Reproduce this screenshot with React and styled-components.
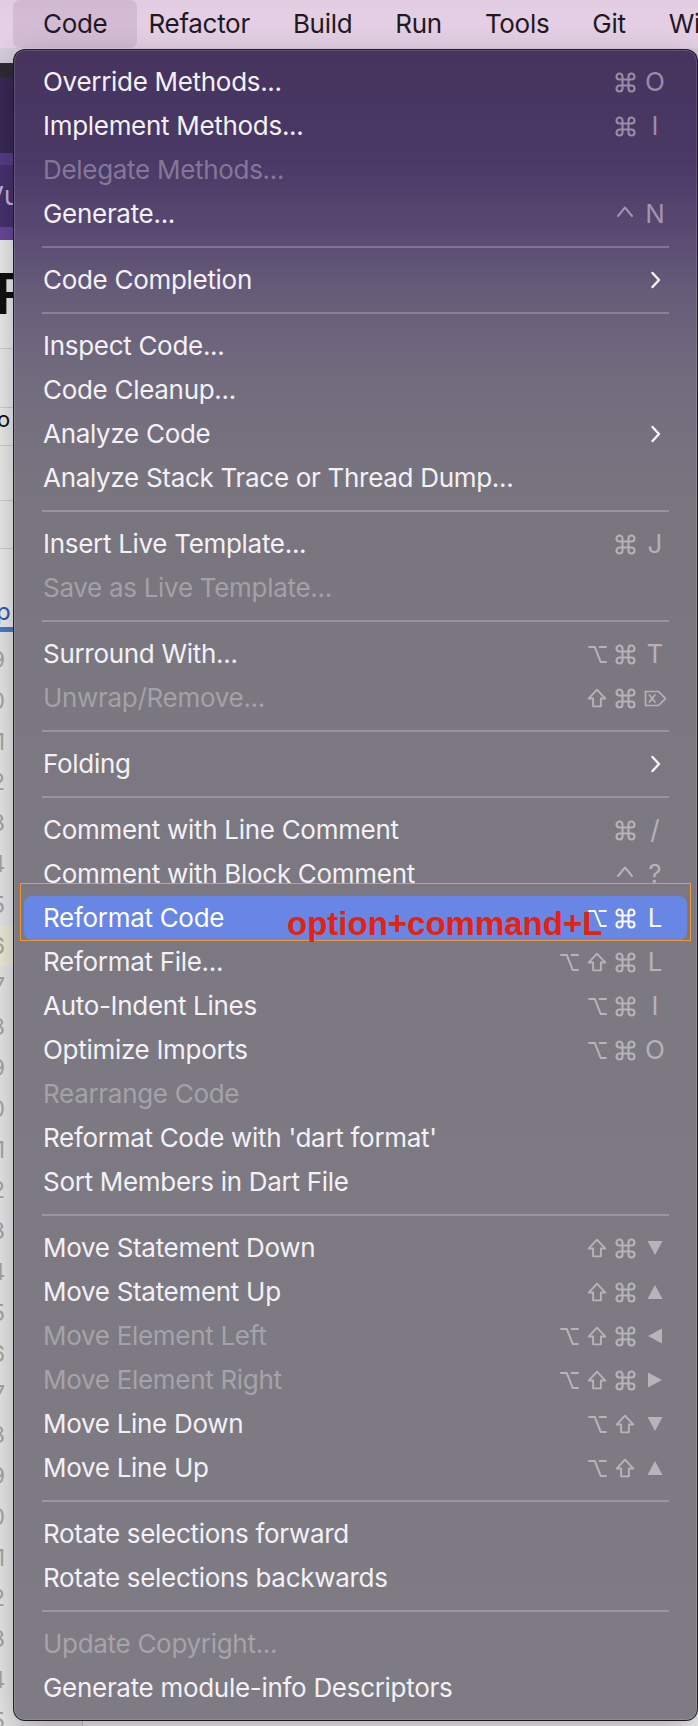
import React from "react";
import styled, { createGlobalStyle } from "styled-components";

const GlobalStyle = createGlobalStyle`
  html, body {
    margin: 0;
    padding: 0;
  }
  body {
    width: 698px;
    height: 1726px;
    overflow: hidden;
    background: #f4f4f4;
    font-family: Inter, "Noto Sans", sans-serif;
    -webkit-font-smoothing: antialiased;
  }
`;

const barItems = ["Code", "Refactor", "Build", "Run", "Tools", "Git", "Window"];

const menu = [
  { label: "Override Methods...", mods: ["cmd"], key: "O" },
  { label: "Implement Methods...", mods: ["cmd"], key: "I" },
  { label: "Delegate Methods...", disabled: true },
  { label: "Generate...", mods: ["ctrl"], key: "N" },
  "sep",
  { label: "Code Completion", submenu: true },
  "sep",
  { label: "Inspect Code..." },
  { label: "Code Cleanup..." },
  { label: "Analyze Code", submenu: true },
  { label: "Analyze Stack Trace or Thread Dump..." },
  "sep",
  { label: "Insert Live Template...", mods: ["cmd"], key: "J" },
  { label: "Save as Live Template...", disabled: true },
  "sep",
  { label: "Surround With...", mods: ["opt", "cmd"], key: "T" },
  { label: "Unwrap/Remove...", disabled: true, mods: ["shift", "cmd"], key: "del" },
  "sep",
  { label: "Folding", submenu: true },
  "sep",
  { label: "Comment with Line Comment", mods: ["cmd"], key: "/" },
  { label: "Comment with Block Comment", mods: ["ctrl"], key: "?" },
  { label: "Reformat Code", mods: ["opt", "cmd"], key: "L", active: true },
  { label: "Reformat File...", mods: ["opt", "shift", "cmd"], key: "L" },
  { label: "Auto-Indent Lines", mods: ["opt", "cmd"], key: "I" },
  { label: "Optimize Imports", mods: ["opt", "cmd"], key: "O" },
  { label: "Rearrange Code", disabled: true },
  { label: "Reformat Code with 'dart format'" },
  { label: "Sort Members in Dart File" },
  "sep",
  { label: "Move Statement Down", mods: ["shift", "cmd"], key: "down" },
  { label: "Move Statement Up", mods: ["shift", "cmd"], key: "up" },
  { label: "Move Element Left", disabled: true, mods: ["opt", "shift", "cmd"], key: "left" },
  { label: "Move Element Right", disabled: true, mods: ["opt", "shift", "cmd"], key: "right" },
  { label: "Move Line Down", mods: ["opt", "shift"], key: "down" },
  { label: "Move Line Up", mods: ["opt", "shift"], key: "up" },
  "sep",
  { label: "Rotate selections forward" },
  { label: "Rotate selections backwards" },
  "sep",
  { label: "Update Copyright...", disabled: true },
  { label: "Generate module-info Descriptors" },
];

const lineNumbers = Array.from({ length: 28 }, (_, i) => i + 9);

// modifier key glyphs, drawn the way the mac menu shows them
const ModGlyph = ({ type }) => {
  if (type === "cmd") {
    return (
      <Glyph width="19" height="19" viewBox="2.5 2.5 19 19" strokeWidth="2.1">
        <path d="M15 6v12a3 3 0 1 0 3-3H6a3 3 0 1 0 3 3V6a3 3 0 1 0-3 3h12a3 3 0 1 0-3-3" />
      </Glyph>
    );
  }
  if (type === "opt") {
    return (
      <Glyph width="19" height="19" viewBox="0 0 18 18" strokeWidth="1.9">
        <path d="M1 2h5.5L12 16h5M11 2h6" />
      </Glyph>
    );
  }
  if (type === "shift") {
    return (
      <Glyph width="20" height="20" viewBox="0 0 18 18" strokeWidth="1.7">
        <path d="M9 1.5 1.5 9.5h4v7h7v-7h4z" />
      </Glyph>
    );
  }
  return (
    <Glyph width="18" height="20" viewBox="0 0 18 20" strokeWidth="2">
      <path d="M2 12 9 3.5 16 12" />
    </Glyph>
  );
};

const triangles = {
  up: "8,1 15.5,15 0.5,15",
  down: "0.5,1 15.5,1 8,15",
  left: "15,0.5 15,15.5 1,8",
  right: "1,0.5 1,15.5 15,8",
};

const KeyGlyph = ({ value }) => {
  if (triangles[value]) {
    return (
      <svg width="16" height="16" viewBox="0 0 16 16">
        <polygon points={triangles[value]} fill="currentColor" />
      </svg>
    );
  }
  if (value === "del") {
    return (
      <Glyph width="23" height="17" viewBox="0 0 23 17" strokeWidth="1.7">
        <path d="M1.5 1.5h13l7 7-7 7h-13z" />
        <path d="M5.5 5 11 12M11 5l-5.5 7" />
      </Glyph>
    );
  }
  return <KeyText>{value}</KeyText>;
};

const Chevron = () => (
  <Glyph width="11" height="18" viewBox="0 0 11 18" strokeWidth="2.4">
    <path d="M2.5 2 9 9l-6.5 7" />
  </Glyph>
);

const MenuRow = ({ item }) => (
  <Row $active={item.active} $disabled={item.disabled}>
    <Label>{item.label}</Label>
    {item.submenu && (
      <Shortcut $submenu>
        <KeySlot>
          <Chevron />
        </KeySlot>
      </Shortcut>
    )}
    {item.key && (
      <Shortcut $active={item.active}>
        <Mods>
          {item.mods.map((m) => (
            <ModSlot key={m}>
              <ModGlyph type={m} />
            </ModSlot>
          ))}
        </Mods>
        <KeySlot>
          <KeyGlyph value={item.key} />
        </KeySlot>
      </Shortcut>
    )}
  </Row>
);

const App = () => {
  return (
    <Screen>
      <GlobalStyle />
      <MenuBar>
        {barItems.map((name, i) => (
          <BarItem key={name} $active={i === 0}>
            {name}
          </BarItem>
        ))}
      </MenuBar>
      <Workspace>
        <Editor>
          <Band $h={15} $bg="#d5cdda" />
          <Band $h={14} $bg="#2e2b33" />
          <Band $h={76} $bg="#3a2958" />
          <Band $h={12} $bg="#5a3e8b" />
          <TabBand>Vu</TabBand>
          <Band $h={13} $bg="#6a49a0" />
          <FileHeader>F</FileHeader>
          <ListRow $h={59} />
          <ListRow $h={38}>o</ListRow>
          <ListRow $h={55} />
          <ListRow $h={48} />
          <TabRow>
            <TabLabel>p</TabLabel>
          </TabRow>
          <CodeRegion>
            <Gutter>
              {lineNumbers.map((n, i) => (
                <GutterLine key={n} $current={i === 7}>
                  <LineNo>{n}</LineNo>
                </GutterLine>
              ))}
            </Gutter>
            <CodeArea />
          </CodeRegion>
        </Editor>

        <Dropdown>
          {menu.map((item, i) => {
            if (item === "sep") return <Separator key={"s" + i} />;
            if (item.active) {
              return (
                <Callout key={item.label}>
                  <MenuRow item={item} />
                  <Frame />
                  <Note>option+command+L</Note>
                </Callout>
              );
            }
            return <MenuRow key={item.label} item={item} />;
          })}
        </Dropdown>
      </Workspace>
    </Screen>
  );
};

const Screen = styled.div`
  width: 698px;
  height: 1726px;
  display: flex;
  flex-direction: column;
  overflow: hidden;
`;

const MenuBar = styled.div`
  display: flex;
  align-items: center;
  height: 48px;
  padding-left: 13px;
  background: linear-gradient(180deg, #e2cce2 0%, #e6d2e6 100%);
  white-space: nowrap;
  overflow: hidden;
  flex: none;
`;

const BarItem = styled.div`
  flex: none;
  height: 48px;
  line-height: 48px;
  font-size: 26px;
  letter-spacing: -0.3px;
  color: #1e1a1f;
  padding: ${({ $active }) => ($active ? "0 30px" : "0 21.5px")};
  margin-right: ${({ $active }) => ($active ? "-10.5px" : "0")};
  border-radius: 7px;
  background: ${({ $active }) => ($active ? "rgba(110, 60, 110, 0.13)" : "transparent")};
`;

const Workspace = styled.div`
  position: relative;
  flex: 1;
`;

const Editor = styled.div`
  display: flex;
  flex-direction: column;
  height: 100%;
  background: #f4f4f4;
`;

const Band = styled.div`
  flex: none;
  height: ${({ $h }) => $h}px;
  background: ${({ $bg }) => $bg};
`;

const TabBand = styled.div`
  flex: none;
  height: 62px;
  line-height: 62px;
  background: #493371;
  color: #c9b9e6;
  font-size: 26px;
  text-indent: -14px;
`;

const FileHeader = styled.div`
  flex: none;
  height: 108px;
  line-height: 108px;
  background: #f2f2f2;
  color: #111;
  font-size: 56px;
  font-weight: 600;
  text-indent: -5px;
`;

const ListRow = styled.div`
  flex: none;
  height: ${({ $h }) => $h}px;
  box-sizing: border-box;
  border-top: 1px solid #d3d3d3;
  background: #f0f0f0;
  font-size: 22px;
  line-height: 22px;
  color: #111;
  text-indent: -3px;
`;

const TabRow = styled.div`
  flex: none;
  height: 84px;
  box-sizing: border-box;
  display: flex;
  align-items: flex-end;
  background: #f3f3f3;
  border-top: 1px solid #d3d3d3;
  border-bottom: 5px solid #4a7ed6;
`;

const TabLabel = styled.span`
  font-size: 24px;
  color: #2f5fb8;
  line-height: 30px;
  margin-left: -4px;
`;

const CodeRegion = styled.div`
  flex: 1;
  display: flex;
  min-height: 0;
`;

const Gutter = styled.div`
  width: 82px;
  flex: none;
  padding-top: 8px;
  background: #ececec;
  border-right: 1px solid #cfcfcf;
  overflow: hidden;
`;

const GutterLine = styled.div`
  height: 40.8px;
  background: ${({ $current }) => ($current ? "#f3f1dc" : "transparent")};
`;

const LineNo = styled.div`
  width: 45px;
  margin-left: -40px;
  text-align: right;
  font-size: 23px;
  line-height: 40.8px;
  color: #a8a8a8;
`;

const CodeArea = styled.div`
  flex: 1;
  background: #f7f7f7;
`;

const Dropdown = styled.div`
  position: absolute;
  top: 1px;
  left: 13px;
  right: 0;
  height: 1672px;
  box-sizing: border-box;
  padding: 10px 0;
  border: 1px solid rgba(20, 16, 24, 0.85);
  border-radius: 12px;
  box-shadow: inset 0 0 0 1px rgba(255, 255, 255, 0.14),
    0 12px 36px rgba(0, 0, 0, 0.3);
  background: linear-gradient(
    180deg,
    #46345e 0px,
    #4a3866 110px,
    #574871 175px,
    #665b78 240px,
    #716a7d 320px,
    #79757f 440px,
    #7b7881 700px,
    #7e7b84 1672px
  );
  overflow: hidden;
`;

const Row = styled.div`
  display: flex;
  align-items: center;
  height: 44px;
  margin: 0 10px;
  padding: 0 20px 0 19px;
  border-radius: 8px;
  font-size: 26px;
  letter-spacing: -0.3px;
  white-space: nowrap;
  background: ${({ $active }) => ($active ? "#6886e4" : "transparent")};
  color: ${({ $active, $disabled }) =>
    $active ? "#ffffff" : $disabled ? "rgba(255, 255, 255, 0.32)" : "#f3f1f5"};
`;

const Label = styled.span`
  flex: none;
  line-height: 44px;
`;

const Shortcut = styled.span`
  display: flex;
  align-items: center;
  margin-left: auto;
  height: 44px;
  letter-spacing: 0;
  color: ${({ $active, $submenu }) =>
    $active || $submenu ? "rgba(255, 255, 255, 0.95)" : "rgba(255, 255, 255, 0.44)"};
`;

const Mods = styled.span`
  display: flex;
  margin-right: 4px;
`;

const ModSlot = styled.span`
  width: 28px;
  height: 44px;
  display: flex;
  align-items: center;
  justify-content: center;
`;

const KeySlot = styled.span`
  width: 24px;
  height: 44px;
  display: flex;
  align-items: center;
  justify-content: center;
`;

const KeyText = styled.span`
  font-size: 26px;
  line-height: 44px;
`;

const Glyph = styled.svg.attrs({
  fill: "none",
  stroke: "currentColor",
  strokeLinecap: "round",
  strokeLinejoin: "round",
})`
  display: block;
  overflow: visible;
`;

const Separator = styled.div`
  height: 2px;
  margin: 10px 28px;
  background: rgba(255, 255, 255, 0.22);
`;

const Callout = styled.div`
  position: relative;
`;

const Frame = styled.div`
  position: absolute;
  top: -13px;
  left: 6px;
  right: 6px;
  bottom: -1px;
  border: 1.5px solid #ef9a32;
  pointer-events: none;
`;

const Note = styled.div`
  position: absolute;
  left: 273px;
  top: 11px;
  font-family: "Liberation Sans", Arial, sans-serif;
  font-weight: 700;
  font-size: 33px;
  line-height: 33px;
  color: #e2230f;
  white-space: nowrap;
`;

export default App;
